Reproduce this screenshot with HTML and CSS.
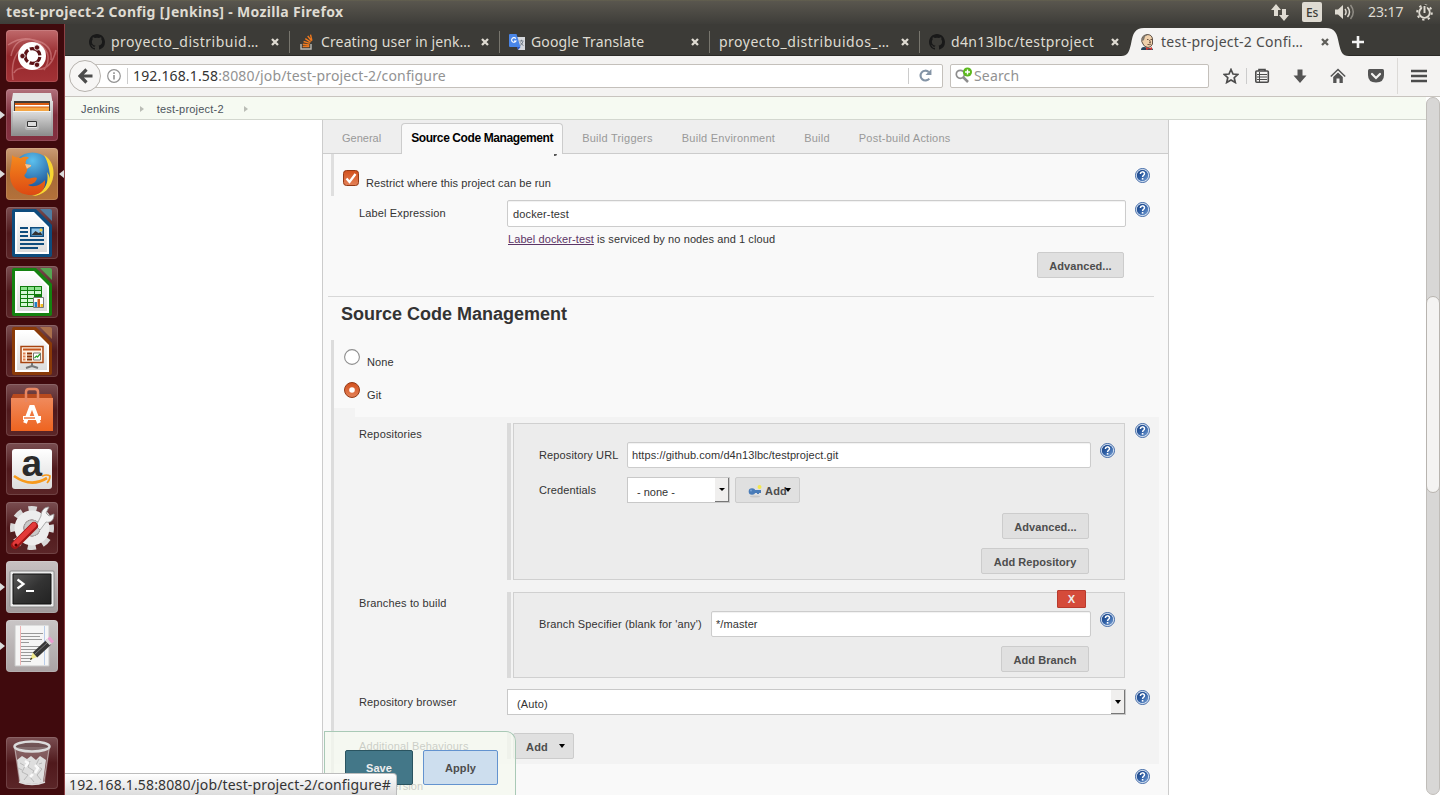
FILE: index.html
```html
<!DOCTYPE html>
<html lang="en">
<head>
<meta charset="utf-8">
<title>test-project-2 Config [Jenkins]</title>
<link rel="stylesheet" href="styles.css">
</head>
<body>
<svg class="defs" width="0" height="0" aria-hidden="true">
  <defs>
    <linearGradient id="paper" x1="0" y1="0" x2="0" y2="1"><stop offset="0" stop-color="#fff"/><stop offset="1" stop-color="#dcdcdc"/></linearGradient>
    <linearGradient id="metal" x1="0" y1="0" x2="0" y2="1"><stop offset="0" stop-color="#dedede"/><stop offset="1" stop-color="#8e8e8e"/></linearGradient>
    <linearGradient id="helpfill" x1="0" y1="0" x2="1" y2="1"><stop offset="0" stop-color="#173f80"/><stop offset=".5" stop-color="#2f5fa5"/><stop offset="1" stop-color="#7fa6d8"/></linearGradient>
    <linearGradient id="bag" x1="0" y1="0" x2="0" y2="1"><stop offset="0" stop-color="#f08a5c"/><stop offset="1" stop-color="#ee6420"/></linearGradient>
    <linearGradient id="fox" x1="0" y1="0" x2="0" y2="1"><stop offset="0" stop-color="#f58a1e"/><stop offset="1" stop-color="#dd4a12"/></linearGradient>
    <radialGradient id="globe" cx=".5" cy=".2" r=".8"><stop offset="0" stop-color="#5cc0ee"/><stop offset="1" stop-color="#123f86"/></radialGradient>
    <linearGradient id="screen" x1="0" y1="0" x2="1" y2="1"><stop offset="0" stop-color="#5a5a5a"/><stop offset=".5" stop-color="#333"/><stop offset="1" stop-color="#222"/></linearGradient>
    <symbol id="help" viewBox="0 0 15 15"><circle cx="7.5" cy="7.5" r="7" fill="#e8f0fa" stroke="#3d66a5"/><circle cx="7.5" cy="7.5" r="5.700" fill="url(#helpfill)"/><path d="M5.400 6.100C5.400 3.200 9.500 3.200 9.500 5.700 9.500 7.300 7.600 7.300 7.600 9" fill="none" stroke="#fff" stroke-width="1.500"/><rect x="6.800" y="10" width="1.600" height="1.600" fill="#fff"/></symbol>
    <symbol id="github" viewBox="0 0 16 16"><path fill="#191919" d="M8 0C3.6 0 0 3.6 0 8c0 3.5 2.3 6.5 5.5 7.6.4.1.5-.2.5-.4v-1.4c-2.2.5-2.7-1-2.7-1-.4-.9-.9-1.2-.9-1.2-.7-.5.1-.5.1-.5.8.1 1.2.8 1.2.8.7 1.3 1.9.9 2.3.7.1-.5.3-.9.5-1.1-1.8-.2-3.6-.9-3.6-4 0-.9.3-1.6.8-2.1-.1-.2-.4-1 .1-2.1 0 0 .7-.2 2.2.8a7.6 7.6 0 0 1 4 0c1.5-1 2.2-.8 2.2-.8.4 1.1.2 1.9.1 2.1.5.6.8 1.3.8 2.1 0 3.1-1.9 3.8-3.6 4 .3.2.5.7.5 1.5v2.2c0 .2.1.5.6.4A8 8 0 0 0 16 8c0-4.4-3.6-8-8-8z"/></symbol>
    <symbol id="x" viewBox="0 0 8 8"><path d="M1 1l6 6M7 1L1 7" stroke="currentColor" stroke-width="2.3" fill="none"/></symbol>
    <symbol id="doc" viewBox="0 0 52 52"><path d="M6 4q0-2 2-2h22L46 18v30q0 2-2 2H8q-2 0-2-2z" fill="currentColor"/><path d="M9 5h19L43 20v27H9z" fill="#fff"/><path d="M11 7h16.500L41 21v24H11z" fill="url(#paper)"/><path d="M34 2h10q2 0 2 2v10z" fill="currentColor"/><path d="M34 2h10q2 0 2 2v10z" fill="#fff" opacity=".28"/></symbol>
  </defs>
</svg>

<header class="topbar">
  <span class="topbar-title">test-project-2 Config [Jenkins] - Mozilla Firefox</span>
  <div class="indicators">
    <svg class="ind-net" width="18" height="17" viewBox="0 0 18 17" fill="#dfdbd2"><path d="M5 0l5 6H7v6H3V6H0zM13 17l-5-6h3V5h4v6h3z"/></svg>
    <span class="ind-lang">Es</span>
    <svg class="ind-vol" width="20" height="16" viewBox="0 0 20 16" fill="none" stroke="#dfdbd2" stroke-width="1.5"><path d="M0 5.500h3L8 1v14l-5-4.500H0z" fill="#dfdbd2" stroke="none"/><path d="M10 5q2.200 3 0 6M12.500 3q4 5 0 10"/><path d="M15.500 1q5.500 7 0 14" opacity=".45"/></svg>
    <span class="ind-time">23:17</span>
    <svg class="ind-gear" width="17" height="17" viewBox="0 0 17 17" fill="none" stroke="#dfdbd2"><circle cx="8.500" cy="8.500" r="5.300" stroke-width="1.800"/><circle cx="8.500" cy="8.500" r="7.300" stroke-width="2" stroke-dasharray="2.300 3.434"/><path d="M8.500 1v8" stroke="#45433d" stroke-width="4.500"/><path d="M8.500 2v7" stroke-width="2"/></svg>
  </div>
</header>

<div class="desktop">
  <nav class="launcher">
    <div class="tile ubuntu"><svg viewBox="0 0 52 52"><path d="M2 15Q20 3 34 14T38 40M50 20Q45 42 28 39T8 43M5 26Q9 6 28 10T45 30M7 50Q4 28 16 18" stroke="#f3b5b5" stroke-opacity=".4" stroke-width="1.500" fill="none"/><circle cx="26" cy="26" r="14" fill="#fff"/><circle cx="26.500" cy="26" r="7.400" fill="none" stroke="#5c1216" stroke-width="3.200" stroke-dasharray="13.500 2" stroke-dashoffset="-1"/><g fill="#5c1216" stroke="#fff" stroke-width=".8"><circle cx="16.500" cy="26" r="2.700"/><circle cx="31" cy="17.500" r="2.700"/><circle cx="31" cy="34.800" r="2.700"/></g></svg></div>
    <div class="tile files on"><svg viewBox="0 0 52 52"><path d="M7 4h38l2 12H5z" fill="#e4e4e4"/><path d="M5 12h42v35H5z" fill="url(#metal)"/><path d="M8 12h36v11H8z" fill="#413c38"/><path d="M9 14h34v9H9z" fill="#d85c12"/><path d="M9 16h34v1.500H9z" fill="#fff"/><path d="M9 18.500h34V23H9z" fill="#f4a544"/><path d="M7 22h38v24H7z" fill="url(#metal)"/><path d="M7 22h38v1H7z" fill="#f4f4f4"/><rect x="20" y="31" width="12" height="9" rx="1.500" fill="#e6e6e6" stroke="#bbb" stroke-width="2"/><path d="M21.500 32.500h9v5h-9z" fill="#ddd" stroke="#333"/></svg></div>
    <div class="tile firefox on focus"><svg viewBox="0 0 52 52"><circle cx="26.500" cy="25" r="20.500" fill="url(#globe)"/><path d="M38 7c8 5 10 13 9.500 20C46 40 37 48 26 48c14-4 17-14 15-24 2 3 3 5 3 8 0-9-2-18-6-25z" fill="#f8d532"/><path d="M6 7c3 3 5 2 9 3 4-2 7-1 8 0-3 1-4 4-3 6l5 1c1 2-4 3-4 5 0 4-4 4-2 7 4 4 7-1 12 1-1 5-5 6-9 7 6 3 13 0 17-5 1 9-4 15-14 15C12 47 4 38 4 27 4 20 6 17 6 7z" fill="url(#fox)"/><path d="M19 16l6 1c1 2-3 2-4 4z" fill="#eec69a"/></svg></div>
    <div class="tile"><svg viewBox="0 0 52 52"><use href="#doc" color="#0e4c7d"/><path d="M14 21h8M14 25h8M14 29h8M14 33h24M14 37h24M14 41h18" stroke="#0e4c7d" stroke-width="2"/><path d="M24 20h14v10H24z" fill="#0e4c7d"/><path d="M25.500 21.500h11v7h-11z" fill="#8cc5ea"/><path d="M25.500 28l4-4 3 2 2-1 2 3z" fill="#333"/><circle cx="35" cy="23" r="1.500" fill="#f5cb3c"/></svg></div>
    <div class="tile"><svg viewBox="0 0 52 52"><use href="#doc" color="#158210"/><path d="M14 20h22v21H14z" fill="#107c0c"/><path d="M15 21h6v3h-6zM22 21h6v3h-6zM29 21h6v3h-6z" fill="#8fe38f"/><path d="M15 25h6v3h-6zM22 25h6v3h-6zM29 25h6v3h-6zM15 29h6v3h-6zM22 29h6v3h-6zM15 33h6v3h-6zM22 33h6v3h-6zM15 37h6v3h-6zM22 37h6v3h-6z" fill="#d5f7d5"/><path d="M27.500 31.500h10v10h-10z" fill="#fff" stroke="#777"/><path d="M28.500 36h2.500v5h-2.500z" fill="#1d80c8"/><path d="M31.500 33h2.500v8h-2.500z" fill="#cc5a18"/><path d="M34.500 38h2.500v3h-2.500z" fill="#f2bd20"/></svg></div>
    <div class="tile"><svg viewBox="0 0 52 52"><use href="#doc" color="#8a3a08"/><path d="M15 21.500h22v16H15z" fill="#fff3e4" stroke="#a84410" stroke-width="1.500"/><path d="M17 24.500h18" stroke="#c5551c" stroke-width="2"/><path d="M17 28.500h2.500M17 31.500h2.500M17 34.500h2.500" stroke="#e08050" stroke-width="2"/><path d="M21 28.500h5M21 31.500h5M21 34.500h5" stroke="#8a3408" stroke-width="2"/><path d="M27.500 28h7v7h-7z" fill="#fff" stroke="#777"/><path d="M28.500 33l2-2 1 1 2.500-3" stroke="#28a028" fill="none" stroke-width="1.200"/><path d="M26 38v3l-6 2M26 41l6 2" stroke="#777" stroke-width="2" fill="none"/></svg></div>
    <div class="tile"><svg viewBox="0 0 52 52"><path d="M7 10h38l2 5H5z" fill="#b84a1e"/><path d="M5 14h42v33H5z" fill="url(#bag)"/><path d="M20 18V8q0-3 3-3h6q3 0 3 3v10" stroke="#e88762" stroke-width="2.500" fill="none"/><path d="M19 39l6-16h2l6 16" stroke="#fff" stroke-width="3.800" fill="none"/><path d="M17 34h18" stroke="#fff" stroke-width="4"/><path d="M18 34h11" stroke="#ee7035" stroke-width="1.400"/></svg></div>
    <div class="tile"><svg viewBox="0 0 52 52"><rect x="6" y="6" width="40" height="40" rx="3" fill="url(#paper)"/><text x="15.500" y="33" class="amazon-a">a</text><path d="M8 33q17 12 33 2" stroke="#f79a1c" stroke-width="2.700" fill="none"/><path d="M36 33q5-2 8 0 0 4-3 7" stroke="#f79a1c" stroke-width="1.700" fill="none"/></svg></div>
    <div class="tile"><svg viewBox="0 0 52 52"><circle cx="26" cy="26" r="18.500" fill="none" stroke="#d9d9d9" stroke-width="7" stroke-dasharray="8 6.530" stroke-dashoffset="4"/><circle cx="26" cy="26" r="13" fill="none" stroke="#ededed" stroke-width="9"/><circle cx="26" cy="26" r="8" fill="#c9c9c9" stroke="#aaa"/><path d="M30 24l5-10c0-5 3-9 8-9l-3 6 3 3 5-2c0 7-4 9-8 8l-6 8z" fill="#f4f4f4" stroke="#999" stroke-width=".8"/><path d="M9 43L28 24" stroke="#a31616" stroke-width="8" stroke-linecap="round"/><path d="M9 42L28 23" stroke="#e33a3a" stroke-width="5" stroke-linecap="round"/><circle cx="10" cy="43" r="1.500" fill="#500"/></svg></div>
    <div class="tile terminal on"><svg viewBox="0 0 52 52"><rect x="4" y="10" width="44" height="36" rx="1" fill="#ededed" stroke="#8b8b8b"/><path d="M7 13h38v30H7z" fill="url(#screen)" stroke="#111"/><path d="M11.500 18.500l6 4.500-6 4.500M20 30h8" stroke="#fff" stroke-width="2.200" fill="none"/></svg></div>
    <div class="tile gedit on"><svg viewBox="0 0 52 52"><path d="M9 5h34v41H9z" fill="#f5f5f5" stroke="#c5c5c5"/><path d="M14.500 6v39" stroke="#efb5b5"/><path d="M38.500 6v39" stroke="#b9cdea"/><path d="M15 13.500h22M15 16.500h19M15 19.500h21M15 22.500h8M15 26.500h19M15 29.500h18M15 32.500h16M15 35.500h14M15 38.500h12M15 41.500h10" stroke="#999"/><path d="M24 40l3-8 4 5z" fill="#efe88c"/><path d="M24 40l1-2.600 1.300 1.600z" fill="#111"/><path d="M29 35L43 22" stroke="#373737" stroke-width="6.500"/><path d="M29 34L42 22" stroke="#777" stroke-width="1"/><path d="M41.500 23l2-2" stroke="#ddd" stroke-width="6.500"/><path d="M43.500 21l2.500-2" stroke="#ea9ccf" stroke-width="6.500"/></svg></div>
    <div class="tile trash"><svg viewBox="0 0 52 52"><path d="M8 10h36l-5 36q-13 4-26 0z" fill="#c9b9b9" fill-opacity=".35"/><path d="M11 23l5-4 5 3 4-3 5 4 4-4 6 4-3 22q-11 4-23 0z" fill="#dedede"/><path d="M14 26l5 3-3 6 6 3-4 5M24 24l-2 6 6 4-4 6 4 5M33 22l-3 6 6 4-5 6 4 5M12 31l4 2M36 26l-3 1" stroke="#b8b8b8" stroke-width="1" fill="none"/><path d="M19 24l3 2-3 4M29 28l3 3-3 5M24 40l3-3" stroke="#fafafa" stroke-width="2.500" fill="none"/><ellipse cx="26" cy="9.500" rx="17.500" ry="5" fill="#777" fill-opacity=".4" stroke="#dcdcdc" stroke-width="2.500"/><path d="M9 12l5 32M43 12l-5 32" stroke="#d0c5c5" stroke-opacity=".7"/><path d="M13 45q13 5 26 0" stroke="#ddd" stroke-width="1.500" fill="none"/></svg></div>
  </nav>

  <div class="browser">
    <div class="tabstrip">
      <div class="tab airy"><svg class="fav"><use href="#github"/></svg><span class="tab-text">proyecto_distribuid…</span><svg class="close"><use href="#x"/></svg></div>
      <div class="tab"><svg class="fav" viewBox="0 0 16 16" fill="none"><path d="M2 10v5h10v-5" stroke="#bcbbb5" stroke-width="1.400"/><path d="M3.700 12.500h6.600M3.800 10.200l6.500.8M4.600 7.500l6.200 1.900M6.300 4.700l5.300 3.500M8.700 2l4 5M11.500.6l1.400 6" stroke="#f0791d" stroke-width="1.400"/></svg><span class="tab-text">Creating user in jenk…</span><svg class="close"><use href="#x"/></svg></div>
      <div class="tab"><svg class="fav" viewBox="0 0 16 16"><path d="M7 3h9v13H9z" fill="#d6d8dc"/><path d="M0 1q0-1 1-1h6.500l4 13H1q-1 0-1-1z" fill="#4a86e8"/><path d="M8 13h3.500L9 16z" fill="#2a56c6"/><path d="M6.800 4.600A2.300 2.300 0 1 0 7 7H5" stroke="#fff" stroke-width="1.100" fill="none"/><path d="M10.500 7h4M12.500 5.800V7M14 7.500q-1 3-3 4M11.500 8.500q1 2 3 3" stroke="#6a7480" stroke-width=".9" fill="none"/></svg><span class="tab-text">Google Translate</span><svg class="close"><use href="#x"/></svg></div>
      <div class="tab airy"><span class="tab-text">proyecto_distribuidos_…</span><svg class="close"><use href="#x"/></svg></div>
      <div class="tab last"><svg class="fav"><use href="#github"/></svg><span class="tab-text">d4n13lbc/testproject</span><svg class="close"><use href="#x"/></svg></div>
      <div class="tab active"><svg class="tab-shape" viewBox="0 0 228 28"><path d="M0 28C7 28 8 24 10 16 12 5 14 0 23 0H205C214 0 216 5 218 16 220 24 221 28 228 28z" fill="#f4f3f2"/></svg><svg class="fav" viewBox="0 0 16 16"><path d="M2 16q0-3 3-3l5 1h3q1 1 1 2z" fill="#26435a"/><path d="M3 4Q4 1 8 .500q5 0 5.500 4.500L13.500 10Q12 13.500 9 13.500 5 13 4 10 2 8 3 4z" fill="#efd0ab" stroke="#3c3027" stroke-width=".8"/><path d="M3 5Q4 .5 9 .700L6 2.500 5 6 3.500 7z" fill="#7b766d"/><path d="M8 5.500h1.500M11.500 5.500H13M8.500 10.500q2 .5 3.500-.500M10.500 6l1 2.500-1.500.3" stroke="#4b3527" stroke-width=".8" fill="none"/><path d="M7 13l3 1.500 3-1.500v3l-3-1-3 1z" fill="#d33833"/></svg><span class="tab-text">test-project-2 Confi…</span><svg class="close"><use href="#x"/></svg></div>
      <svg class="newtab" viewBox="0 0 14 14"><path d="M7 1v12M1 7h12" stroke="#f4f4f4" stroke-width="2.600"/></svg>
    </div>

    <div class="toolbar">
      <div class="back"><svg width="15" height="16" viewBox="0 0 15 16"><path d="M8.500 1.500L2 8l6.500 6.500M3 8h11.500" stroke="#4c4c4c" stroke-width="3.200" fill="none"/></svg></div>
      <div class="urlbar">
        <svg class="info" viewBox="0 0 14 14"><circle cx="7" cy="7" r="6.300" fill="none" stroke="#929292" stroke-width="1.200"/><path d="M7 6v4.500M7 3.200V5" stroke="#929292" stroke-width="1.600"/></svg>
        <span class="url">192.168.1.58<span class="url-dim">:8080/job/test-project-2/configure</span></span>
        <svg class="reload" viewBox="0 0 12 12"><path d="M9.500 8.800A4.500 4.500 0 1 1 9 2.800" fill="none" stroke="#8494a6" stroke-width="2"/><path d="M11.500 0v5.500H6z" fill="#8494a6"/></svg>
      </div>
      <div class="searchbar">
        <svg width="18" height="18" viewBox="0 0 18 18"><circle cx="5.300" cy="7.300" r="4" fill="none" stroke="#8d8d8d" stroke-width="1.700"/><path d="M8 10l5 5" stroke="#8d8d8d" stroke-width="2.500"/><circle cx="12.500" cy="5" r="4.500" fill="#5cb81c"/><path d="M12.500 2.500v5M10 5h5" stroke="#fff" stroke-width="1.400"/></svg>
        <span class="search-text">Search</span>
      </div>
      <div class="tools">
        <svg width="16" height="16" viewBox="0 0 16 16"><path d="M8 1.500l2 4.500 4.800.500-3.600 3.200 1.100 4.800L8 12l-4.300 2.500 1.100-4.800L1.200 6.500 6 6z" fill="none" stroke="#4c4c4c" stroke-width="1.700"/></svg>
        <svg class="t-list" width="16" height="16" viewBox="0 0 16 16" fill="none" stroke="#4c4c4c"><rect x="1.800" y="3" width="12.500" height="11.300" rx="1" stroke-width="1.600"/><path d="M5 3V1.500h6V3" stroke-width="1.600"/><path d="M3 6.500h10M3 9h10M3 11.500h10M5.500 4v10" stroke-width="1"/></svg>
        <svg class="t-down" width="16" height="16" viewBox="0 0 16 16"><path d="M5.500 1.500h5v6h4L8 15 1.500 7.500h4z" fill="#545454"/></svg>
        <svg class="t-home" width="16" height="16" viewBox="0 0 16 16"><path d="M.8 8.500L8 1.500l7.200 7" fill="none" stroke="#545454" stroke-width="1.500"/><path d="M3.200 9L8 4.600 12.800 9v6H9.500v-4.500h-3V15H3.200z" fill="#545454"/></svg>
        <svg class="t-pocket" width="16" height="16" viewBox="0 0 16 16"><path d="M1.500 1h13Q16 1 16 2.500V7q0 7.500-8 7.500T0 7V2.500Q0 1 1.500 1z" fill="#545454"/><path d="M4 6l4 4 4-4" fill="none" stroke="#f4f3f2" stroke-width="2.200" stroke-linecap="round"/></svg>
        <svg class="t-menu" width="16" height="16" viewBox="0 0 16 16"><path d="M0 3h16M0 8h16M0 13h16" stroke="#4c4c4c" stroke-width="2.600"/></svg>
      </div>
    </div>

    <div class="viewport">
      <div class="page">
        <div class="crumbs"><span>Jenkins</span><i class="crumb-arrow"></i><span>test-project-2</span><i class="crumb-arrow"></i></div>
        <main class="config">
          <div class="config-tabs">
            <span class="ctab general">General</span>
            <span class="ctab current"><b>Source Code Management</b></span>
            <span class="ctab">Build Triggers</span>
            <span class="ctab">Build Environment</span>
            <span class="ctab">Build</span>
            <span class="ctab">Post-build Actions</span>
            <i class="scrolled-bit"></i>
          </div>

          <div class="restrict">
            <svg class="checkbox" viewBox="0 0 16 16"><defs><linearGradient id="cb" x1="0" y1="0" x2="0" y2="1"><stop offset="0" stop-color="#d2501c"/><stop offset="1" stop-color="#e48258"/></linearGradient></defs><rect x=".5" y=".5" width="15" height="15" rx="3" fill="url(#cb)" stroke="#943a16"/><path d="M3.500 8.500l3 3.500 6-8" fill="none" stroke="#fff" stroke-width="2.300"/></svg>
            <span class="opt-text">Restrict where this project can be run</span>
            <svg class="help"><use href="#help"/></svg>
          </div>
          <div class="field-row label-row">
            <span class="label">Label Expression</span>
            <div class="input wide">docker-test</div>
            <svg class="help"><use href="#help"/></svg>
          </div>
          <div class="validation"><a>Label docker-test</a> is serviced by no nodes and 1 cloud</div>
          <div class="adv-row"><div class="btn b-adv">Advanced...</div></div>
          <div class="rule"></div>
          <h2 class="section-title">Source Code Management</h2>

          <div class="scm">
            <div class="radio-row"><svg class="radio" viewBox="0 0 16 16"><circle cx="8" cy="8" r="7.400" fill="#fff" stroke="#8e8e8e" stroke-width="1.100"/></svg><span class="opt-text">None</span></div>
            <div class="radio-row git"><svg class="radio" viewBox="0 0 16 16"><circle cx="8" cy="8" r="7.500" fill="url(#cb)" stroke="#943a16"/><circle cx="8" cy="8" r="2.800" fill="#fff"/></svg><span class="opt-text">Git</span></div>
            <div class="step"></div>
            <div class="git-area">
              <div class="field-row">
                <span class="label">Repositories</span>
                <div class="repeat">
                  <div class="chunk">
                    <div class="inner"><span class="inner-label">Repository URL</span><div class="input">https://github.com/d4n13lbc/testproject.git</div><svg class="help"><use href="#help"/></svg></div>
                    <div class="inner cred"><span class="inner-label">Credentials</span><div class="select small"><span>- none -</span><i class="drop"></i></div>
                      <div class="btn b-key"><svg class="key" width="16" height="14" viewBox="0 0 16 14"><ellipse cx="7" cy="12.500" rx="5" ry=".9" fill="#c8c8c8"/><circle cx="11.500" cy="3" r="2" fill="#f5e94b"/><path d="M5 6h8v3h-2v1H9V9H5z" fill="#4a7cb8"/><circle cx="4" cy="7.500" r="3.300" fill="#4a7cb8"/><circle cx="3" cy="6.500" r=".9" fill="#7ea6d6"/></svg><span>Add</span><i class="caret"></i></div></div>
                    <div class="btn b-adv2">Advanced...</div>
                    <div class="btn b-repo">Add Repository</div>
                  </div>
                </div>
                <svg class="help"><use href="#help"/></svg>
              </div>
              <div class="field-row branches">
                <span class="label">Branches to build</span>
                <div class="repeat">
                  <div class="chunk">
                    <div class="delete">X</div>
                    <div class="inner"><span class="inner-label specifier">Branch Specifier (blank for 'any')</span><div class="input">*/master</div><svg class="help"><use href="#help"/></svg></div>
                    <div class="btn b-branch">Add Branch</div>
                  </div>
                </div>
              </div>
              <div class="field-row repo-browser">
                <span class="label">Repository browser</span>
                <div class="select wide"><span>(Auto)</span><i class="drop"></i></div>
                <svg class="help"><use href="#help"/></svg>
              </div>
              <div class="field-row behaviours">
                <span class="label">Additional Behaviours</span>
                <div class="repeat"><div class="btn b-add"><span>Add</span><i class="caret"></i></div></div>
              </div>
            </div>
            <div class="radio-row svn"><svg class="radio" viewBox="0 0 16 16"><circle cx="8" cy="8" r="7.400" fill="#fff" stroke="#8e8e8e"/></svg><span class="opt-text">Subversion</span><svg class="help"><use href="#help"/></svg></div>
          </div>
          <div class="save-bar"><div class="save">Save</div><div class="apply">Apply</div></div>
        </main>
        <div class="status">192.168.1.58:8080/job/test-project-2/configure#</div>
      </div>
      <div class="scrollbar"><div class="thumb"></div></div>
    </div>
  </div>
</div>
</body>
</html>
```
FILE: styles.css
```css
* { box-sizing: border-box; }
body { margin: 0; width: 1440px; height: 795px; overflow: hidden; display: flex; flex-direction: column; font: 11px/14px "Liberation Sans", Arial, sans-serif; letter-spacing: .13px; color: #333; background: #fff; }
svg, i { display: block; flex: none; }
span { white-space: nowrap; }
.defs { position: absolute; }

/* System panel */
.topbar { height: 24px; flex: none; display: flex; justify-content: space-between; align-items: center; padding: 0 7px 0 6px; background: linear-gradient(#64614f, #59564e 6%, #3e3d39); color: #dfdbd2; font-family: "Noto Sans", sans-serif; }
.topbar-title { font-size: 14px; font-weight: 700; line-height: 24px; letter-spacing: .33px; }
.indicators { display: flex; align-items: center; }
.ind-net { margin-right: 13px; }
.ind-lang { width: 20px; height: 20px; margin-right: 13px; border-radius: 2px; background: #dfdbd2; color: #3c3b37; font-size: 12px; font-weight: 500; line-height: 21px; text-align: center; letter-spacing: -.2px; }
.ind-vol { margin-right: 13px; }
.ind-time { width: 36px; margin-right: 12px; font-size: 14px; letter-spacing: -.1px; }

/* Launcher */
.desktop { flex: 1; display: flex; min-height: 0; }
.launcher { width: 65px; flex: none; padding: 6px 0 0 6px; background: #400a0d; border-right: 1px solid #8c4145; display: flex; flex-direction: column; gap: 7px; }
.tile { width: 52px; height: 52px; flex: none; border-radius: 4px; position: relative; background: linear-gradient(#7a4e51, #50191c 50%, #5b2628); box-shadow: inset 0 0 0 1px rgba(255,255,255,.13); }
.tile svg { width: 52px; height: 52px; }
.ubuntu { background: linear-gradient(#c06a6c, #94272b 50%, #a33236); }
.files { background: linear-gradient(#b2717c, #7d2c3a 50%, #843141); }
.firefox { background: linear-gradient(#cb9b74, #a56a38 50%, #b4713a); }
.terminal { background: linear-gradient(#c8c1c2, #a09a9b); }
.gedit { background: linear-gradient(#c9c5c6, #aaa3a4); }
.trash { margin-top: 58px; }
.on::before { content: ""; position: absolute; left: -6px; top: 22px; border: 4px solid transparent; border-left: 5px solid #dcdcdc; border-right: 0; }
.focus::after { content: ""; position: absolute; right: -6px; top: 22px; border: 4px solid transparent; border-right: 5px solid #dcdcdc; border-left: 0; }
.amazon-a { font: 700 37px "Liberation Sans", sans-serif; fill: #2b2b2b; }

/* Tabs */
.browser { flex: 1; min-width: 0; display: flex; flex-direction: column; }
.tabstrip { height: 32px; flex: none; display: flex; align-items: center; padding: 4px 0 0 15px; background: #3c3b37; box-shadow: inset 0 -1px #2b2a27; color: #dfdbd2; font: 14px/22px "Noto Sans", sans-serif; }
.tab { width: 210px; height: 22px; flex: none; display: flex; align-items: center; padding: 0 10px 0 9px; border-right: 1px solid #77756d; position: relative; }
.tab.airy { letter-spacing: .5px; }
.tab.last { border-right-color: transparent; letter-spacing: .36px; }
.fav { width: 16px; height: 16px; margin-right: 6px; }
.tab-text { margin-right: auto; }
.close { width: 8px; height: 8px; color: #dfdbd2; }
.tab.active { color: #4c4c4c; border-color: transparent; letter-spacing: .25px; }
.tab.active > * { position: relative; }
.tab.active .tab-shape { position: absolute; left: -9px; top: -3px; width: 228px; height: 28px; }
.tab.active .close { color: #5f5e5a; }
.newtab { width: 14px; height: 14px; margin-left: 11px; }

/* Navigation toolbar */
.toolbar { height: 41px; flex: none; display: flex; align-items: flex-start; padding: 8px 0 0 4px; background: #f4f3f2; border-bottom: 1px solid #c8c4bf; font: 14px/22px "Noto Sans", sans-serif; letter-spacing: .15px; }
.back { width: 32px; height: 32px; flex: none; margin: -4px -16px 0 0; border: 1px solid #b6b2ad; border-radius: 50%; background: #f7f6f5; display: flex; align-items: center; justify-content: center; z-index: 1; }
.urlbar { width: 858px; height: 24px; flex: none; display: flex; align-items: center; border: 1px solid #c4c0bb; border-radius: 2px; background: #fff; padding-left: 21px; }
.info { width: 14px; height: 14px; margin-right: 6px; }
.url { color: #333; border-left: 1px solid #ccc; height: 16px; line-height: 16px; padding-left: 5px; }
.url-dim { color: #929292; }
.reload { width: 34px; height: 16px; padding: 1px 10px 2px; margin-left: auto; border-left: 1px solid #ccc; }
.searchbar { width: 259px; height: 24px; margin-left: 7px; flex: none; display: flex; align-items: center; padding-left: 4px; border: 1px solid #c4c0bb; border-radius: 2px; background: #fff; color: #929292; }
.search-text { margin-left: 1px; }
.tools { flex: 1; height: 24px; display: flex; align-items: center; padding-left: 14px; }
.t-list { box-sizing: content-box; margin-left: 7px; padding-left: 7px; border-left: 1px solid #ccc; }
.t-down, .t-home, .t-pocket { margin-left: 22px; }
.t-menu { box-sizing: content-box; margin-left: 13px; padding: 10px 0 10px 13px; border-left: 1px solid #dcdad7; }

/* Page */
.viewport { flex: 1; display: flex; min-height: 0; }
.page { width: 1361px; display: flex; flex-direction: column; position: relative; overflow: hidden; }
.crumbs { height: 23px; flex: none; display: flex; align-items: center; padding: 2px 0 0 16px; background: #f6faf2; border-bottom: 1px solid #d3d7cf; color: #4d545d; letter-spacing: .2px; }
.crumb-arrow { margin: 0 13px 0 20px; border: 3.500px solid transparent; border-left: 4px solid #babdb6; border-right: 0; }
.config { width: 847px; flex: 1; min-height: 0; margin-left: 257px; border: 1px solid #ccc; border-width: 0 1px; background: #f9f9f9; position: relative; }
.config-tabs { height: 34px; display: flex; align-items: flex-end; background: #eee; border-bottom: 1px solid #ccc; padding-left: 19px; color: #999; position: relative; letter-spacing: .24px; }
.ctab { height: 23px; line-height: 16px; margin-right: 29px; }
.ctab.general { letter-spacing: 0; }
.ctab.current { width: 162px; height: 31px; margin: 0 19px -1px -9px; padding: 6px 0 0 9px; border: 1px solid #ccc; border-bottom: 0; border-radius: 4px 4px 0 0; background: #f9f9f9; color: #000; letter-spacing: -.4px; }
.ctab b { font-size: 12px; }
.scrolled-bit { position: absolute; left: 231px; top: 34px; width: 3px; height: 2px; background: #555; border-bottom-right-radius: 3px; }
.help { width: 15px; height: 15px; margin-left: auto; }
.opt-text { margin: 22px 0 0 7px; }
.restrict { height: 42px; margin-left: 8px; padding: 0 18px 0 9px; border-left: 3px solid #dfdfdf; display: flex; letter-spacing: .09px; }
.checkbox { width: 16px; height: 16px; margin-top: 16px; }
.restrict .help { margin-top: 14px; }
.field-row { display: flex; }
.label { width: 148px; flex: none; letter-spacing: .15px; }
.label-row { padding: 4px 18px 0 36px; }
.label-row .label { padding-top: 6px; }
.label-row .help { margin-top: 2px; }
.input { flex: 1; height: 26px; border: 1px solid #ccc; border-radius: 2px; background: #fff; padding: 0 4px; line-height: 25px; box-shadow: inset 0 1px 1px rgba(0,0,0,.06); letter-spacing: .08px; }
.input.wide { flex: none; width: 619px; height: 27px; line-height: 27px; padding-left: 5px; letter-spacing: .14px; }
.validation { margin: 5px 0 0 185px; letter-spacing: .09px; }
.validation a { color: #5c3566; text-decoration: underline; }
.btn { height: 26px; flex: none; display: flex; align-items: center; justify-content: center; padding-top: 2px; border: 1px solid #ccc; border-radius: 2px; background: #e0e0e0; color: #4d4d4d; font-weight: 700; letter-spacing: .06px; }
.adv-row { display: flex; justify-content: flex-end; padding: 6px 44px 0 0; }
.b-adv, .b-adv2 { width: 87px; }
.rule { height: 1px; margin: 18px 14px 0 5px; background: #d8d8d8; }
.section-title { margin: 7px 0 0 18px; font-size: 18px; line-height: 20px; letter-spacing: 0; }
.scm { margin: 16px 0 0 8px; border-left: 3px solid #dcdcdc; }
.radio-row { height: 33px; padding-left: 10px; display: flex; }
.radio-row .opt-text { margin-top: 15px; }
.radio { width: 16px; height: 16px; margin-top: 9px; }
.git { height: 35px; }
.step { width: 21px; height: 9px; background: #f3f3f3; }
.git-area { width: 825px; padding: 6px 9px 5px 25px; background: #f3f3f3; }
.git-area .label { padding-top: 4px; }
.repeat { border-left: 4px solid #dadada; padding-left: 2px; }
.chunk { width: 612px; padding: 18px 0 5px 25px; border: 1px solid #d0d0d0; background: #ececec; display: flex; flex-direction: column; position: relative; }
.inner { display: flex; padding-right: 9px; }
.inner-label { width: 88px; flex: none; padding-top: 6px; }
.inner-label.specifier { width: 172px; }
.inner .help { margin: 1px 0 0 9px; }
.cred { margin-top: 9px; }
.select { height: 26px; flex: none; display: flex; border: 1px solid #c8c8c8; background: #fff; padding-left: 9px; line-height: 28px; }
.select.small { width: 103px; margin-right: 5px; letter-spacing: 0; }
.select.wide { width: 619px; }
.drop { width: 14px; height: 24px; margin-left: auto; border: 1px solid #777; border-width: 0 1px 1px 0; background: #f0efee; display: flex; align-items: center; justify-content: center; }
.drop::before, .caret { content: ""; width: 0; height: 0; border: 3.500px solid transparent; border-top: 4px solid #000; border-bottom: 0; }
.select.small .drop::before { border-width: 3px 3px 0; }
.b-key { width: 65px; padding-left: 12px; justify-content: flex-start; letter-spacing: .2px; }
.key { margin-right: 1px; }
.b-key .caret { margin: -3px 0 0 -2px; }
.chunk > .btn { align-self: flex-end; margin-right: 35px; }
.b-adv2 { margin-top: 10px; }
.b-repo { width: 108px; margin-top: 9px; }
.b-branch { width: 88px; margin-top: 9px; }
.branches { margin-top: 12px; }
.delete { position: absolute; right: 38px; top: -3px; width: 29px; height: 18px; border: 1px solid #b83a2d; border-radius: 1px; background: #d54b3a; color: #eee; font-weight: 700; line-height: 17px; text-align: center; }
.repo-browser { margin-top: 11px; }
.git-area .repo-browser .label { padding-top: 6px; }
.repo-browser .help { margin-top: 1px; }
.behaviours { margin-top: 18px; }
.git-area .behaviours .label { padding-top: 6px; }
.b-add { width: 61px; justify-content: flex-start; padding-left: 12px; letter-spacing: .2px; }
.b-add .caret { margin: -2px 0 0 11px; }
.svn { padding-right: 18px; }
.svn .radio { margin-top: 12px; }
.svn .help { margin-top: 5px; }

/* Sticky actions and link preview */
.save-bar { position: absolute; left: 1px; bottom: 0; width: 192px; height: 64px; display: flex; gap: 10px; padding: 18px 0 0 20px; border: 1px solid #a9c9b6; border-bottom: 0; border-radius: 0 10px 0 0; background: rgba(245,249,239,.78); font-weight: 700; line-height: 35px; text-align: center; letter-spacing: .08px; }
.save { width: 68px; height: 35px; background: #437788; border: 1px solid #2a5460; border-radius: 2px; color: #eee; }
.apply { width: 75px; height: 35px; background: #cddeee; border: 1px solid #6393cf; border-radius: 2px; color: #4d4d4d; }
.status { position: absolute; left: 0; bottom: 0; width: 332px; height: 22px; padding-left: 4px; border: 1px solid #bcbcbc; border-width: 1px 1px 0 0; border-radius: 0 4px 0 0; background: linear-gradient(#fff, #dcdcdc); font: 14px/22px "Noto Sans", sans-serif; letter-spacing: .15px; }
.scrollbar { flex: 1; padding-top: 198px; background: #d8d7d6; border: 1px solid #c0bdb9; border-radius: 7px; }
.thumb { height: 197px; margin: 0 -1px; border: 1px solid #b8b4af; border-radius: 7px; background: #f4f3f2; }
```
